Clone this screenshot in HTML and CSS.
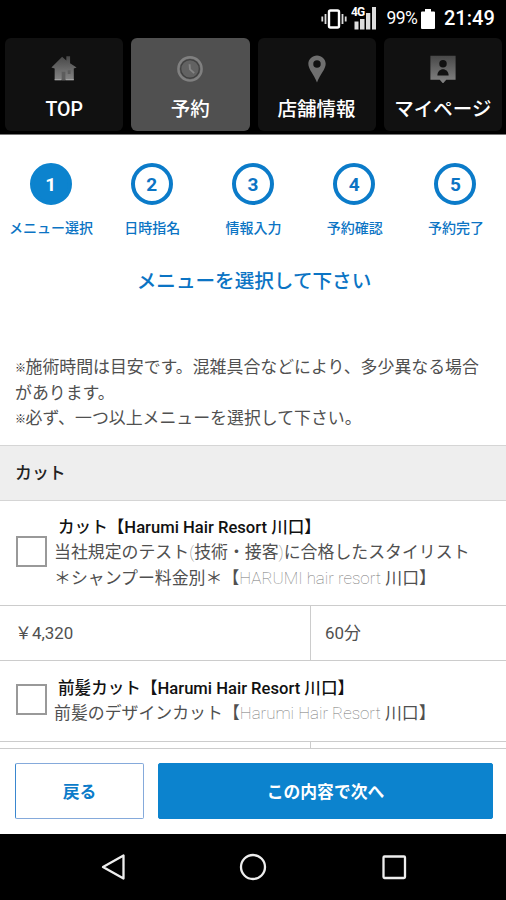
FILE: index.html
```html
<!DOCTYPE html>
<html lang="ja">
<head>
<meta charset="utf-8">
<title>メニュー選択</title>
<link rel="stylesheet" href="styles.css">
</head>
<body>
<div class="status">
  <svg class="vibrate" width="26" height="22" viewBox="0 0 26 22"><rect x="8" y="2.5" width="10" height="17" rx="1.5" fill="none" stroke="#fff" stroke-width="2.4"/><path d="M4.5 6v10M1.3 8.5v5M21.5 6v10M24.7 8.5v5" stroke="#ddd" stroke-width="1.8"/></svg>
  <svg class="signal" width="26" height="25" viewBox="0 0 26 25"><path d="M3.5 16.5h4v8h-4zM9 14h4.500v10.500H9zM15 8h4.300v16.500H15zM21 2h4v22.500h-4z" fill="#ddd"/><text x="0" y="10.500" class="net">4G</text></svg>
  <span class="pct">99%</span>
  <svg class="battery" width="14" height="22" viewBox="0 0 14 22"><path d="M4 1h6v2.500h3q1 0 1 1V20q0 1-1 1H1q-1 0-1-1V4.500q0-1 1-1h3z" fill="#fff"/></svg>
  <span class="clock">21:49</span>
</div>
<nav class="nav">
  <a class="tab">
    <svg width="30" height="32" viewBox="0 0 30 32"><defs><linearGradient id="g" x1="0" y1="0" x2="0" y2="1"><stop offset="0" stop-color="#484848"/><stop offset="1" stop-color="#858585"/></linearGradient></defs><path d="M1.500 15.500 13 4l4.500 4V3.500h4V11L28.500 15.500 25.500 16.500V29H5V16.500z" fill="url(#g)"/><path d="M12.500 29v-9h4v9M19 18.500h3v4h-3z" fill="#5c5c5c"/><path d="M5 28.500h7M17 28.500h8.500" stroke="#aaa"/></svg>
    <span>TOP</span>
  </a>
  <a class="tab on">
    <svg width="30" height="32" viewBox="0 0 30 32"><circle cx="15" cy="17" r="12.500" fill="#626262" stroke="#808080" stroke-width="2.500"/><circle cx="15" cy="17" r="10" fill="none" stroke="#404040" stroke-width="1.400"/><path d="m14.500 12 .5 5.500 4.500 4" fill="none" stroke="#858585" stroke-width="2"/></svg>
    <span>予約</span>
  </a>
  <a class="tab">
    <svg width="30" height="32" viewBox="0 0 30 32"><path fill-rule="evenodd" d="M15 2.500c-5 0-9.300 4-9.300 9 0 6 5.800 11 9.300 20 3.500-9 9.300-14 9.300-20 0-5-4.300-9-9.300-9zm0 5.200a4 4 0 1 1 0 8 4 4 0 0 1 0-8z" fill="#6f6f6f"/></svg>
    <span>店舗情報</span>
  </a>
  <a class="tab">
    <svg width="30" height="32" viewBox="0 0 30 32"><path d="M1.500 3h27v25.500h-10L15 32.500 11.500 28.500h-10z" fill="url(#g)"/><circle cx="15" cy="11.500" r="4" fill="#111"/><path d="M9 24c0-9 12-9 12 0z" fill="#111"/></svg>
    <span>マイページ</span>
  </a>
</nav>
<main>
  <ol class="steps">
    <li class="current"><b>1</b><span>メニュー選択</span></li>
    <li><b>2</b><span>日時指名</span></li>
    <li><b>3</b><span>情報入力</span></li>
    <li><b>4</b><span>予約確認</span></li>
    <li><b>5</b><span>予約完了</span></li>
  </ol>
  <h1>メニューを選択して下さい</h1>
  <div class="note"><p><i>※</i>施術時間は目安です。混雑具合などにより、多少異なる場合<br>があります。</p><p><i>※</i>必ず、一つ以上メニューを選択して下さい。</p></div>
  <h2>カット</h2>
  <section class="item first">
    <span class="check"></span>
    <div class="text"><h3>カット【Harumi Hair Resort 川口】</h3><p>当社規定のテスト<span class="thin">(</span>技術・接客<span class="thin">)</span>に合格したスタイリスト<br>＊シャンプー料金別＊【<span class="thin">HARUMI hair resort</span> 川口】</p></div>
  </section>
  <div class="row"><span class="price">￥4,320</span><span class="time">60分</span></div>
  <section class="item second">
    <span class="check"></span>
    <div class="text"><h3>前髪カット【Harumi Hair Resort 川口】</h3><p>前髪のデザインカット【<span class="thin">Harumi Hair Resort</span> 川口】</p></div>
  </section>
  <div class="row"><span class="price"></span><span class="time"></span></div>
</main>
<footer class="actions"><button class="back">戻る</button><button class="next">この内容で次へ</button></footer>
<div class="system">
  <svg width="28" height="30" viewBox="0 0 28 30"><path d="M24.500 3.500v23L4 15z"/></svg>
  <svg width="28" height="30" viewBox="0 0 28 30"><circle cx="14" cy="15" r="12"/></svg>
  <svg width="28" height="30" viewBox="0 0 28 30"><rect x="3.500" y="4.500" width="21.500" height="21.500" rx="1"/></svg>
</div>
</body>
</html>
```
FILE: styles.css
```css
* { box-sizing: border-box; margin: 0; padding: 0; }
body { width: 506px; height: 900px; overflow: hidden; display: flex; flex-direction: column; background: #fff; color: #505050; font: 16.9px/25.5px Roboto, "Noto Sans CJK JP", sans-serif; }
.status { height: 36px; flex: none; background: #000; color: #fff; display: flex; align-items: center; padding: 1px 12px 0 0; justify-content: flex-end; font-weight: 500; }
.vibrate { margin-right: 4px; }
.signal { margin: 0 10px 2px 0; }
.net { font: bold 12px Roboto, sans-serif; fill: #fff; stroke: #000; stroke-width: 2px; paint-order: stroke; letter-spacing: -.8px; }
.pct { font-size: 17.500px; font-weight: 400; letter-spacing: -.7px; margin-right: 4px; }
.battery { margin-right: 9px; }
.clock { font-size: 20px; width: 50px; white-space: nowrap; }
.nav { flex: none; height: 99px; background: #000; padding: 2px 4px 3px 5px; display: grid; grid-template-columns: repeat(4, 1fr); gap: 8px; border-bottom: 1px solid #777; }
.tab { background: #111; color: #fff; border-radius: 6px; display: flex; flex-direction: column; align-items: center; padding-top: 15px; font-size: 19.500px; font-weight: 500; white-space: nowrap; }
.tab svg { width: 28px; height: 30px; flex: none; }
.tab span { margin-top: 15px; line-height: 24px; }
.on { background: #505050; }
main { height: 613px; overflow: hidden; flex: none; }
.steps { list-style: none; display: grid; grid-template-columns: repeat(5, 1fr); padding: 28px 0 0; color: #0b74c4; }
.steps li { display: flex; flex-direction: column; align-items: center; font-size: 14px; font-weight: 500; }
.steps b { width: 42px; height: 42px; border: 4px solid #0b7bc9; border-radius: 50%; font-size: 19px; font-weight: 700; line-height: 35px; text-align: center; }
.steps .current b { background: #0c83ce; color: #fff; border-color: #0c83ce; }
.steps span { margin-top: 13px; padding-left: 1px; line-height: 20px; white-space: nowrap; }
h1 { margin-top: 29px; padding-left: 2px; text-align: center; font-size: 19.600px; line-height: 30px; font-weight: 500; color: #0b74c4; }
.note { margin: 58px 0 0 15px; height: 77px; white-space: nowrap; }
.note i { display: inline-block; font-style: normal; font-size: 11px; line-height: 12px; width: 10.500px; color: #222; vertical-align: 1px; }
h2 { margin-top: 13px; height: 56px; padding-left: 15px; background: #eee; border: solid #d5d5d5; border-width: 1px 0; font-size: 16.900px; line-height: 54px; color: #222; font-weight: 500; }
.item { display: flex; align-items: center; padding-left: 16px; border-bottom: 1px solid #ccc; }
.first { height: 105px; }
.second { height: 81px; }
.check { width: 31px; height: 31px; border: 2px solid #999; margin: 0 7px 4px 0; flex: none; }
.text { white-space: nowrap; }
h3 { font-size: 16.600px; line-height: 25.500px; font-weight: 500; color: #111; padding-left: 4px; }
.thin { font-weight: 100; color: #777; }
.row { height: 55px; display: flex; border-bottom: 1px solid #ccc; line-height: 54px; }
.price { width: 310px; padding-left: 15px; }
.time { flex: 1; border-left: 1px solid #ccc; padding-left: 14px; }
.actions { flex: none; height: 86px; border-top: 1px solid #ccc; padding: 14px 13px 14px 15px; display: flex; gap: 14px; background: #fff; }
button { font: 700 16.800px/24px Roboto, "Noto Sans CJK JP", sans-serif; border: 1px solid #0c83ce; border-radius: 2px; height: 56px; padding-top: 1px; }
.back { width: 129px; background: #fff; color: #0b7bc9; border-color: #85aadb; border-left-color: #3a87cf; }
.next { flex: 1; background: #0c83ce; color: #fff; }
.system { flex: 1; background: #000; display: flex; justify-content: center; gap: 112.500px; align-items: center; }
.system svg { fill: none; stroke: #eee; stroke-width: 2.300px; stroke-linejoin: round; }
```
